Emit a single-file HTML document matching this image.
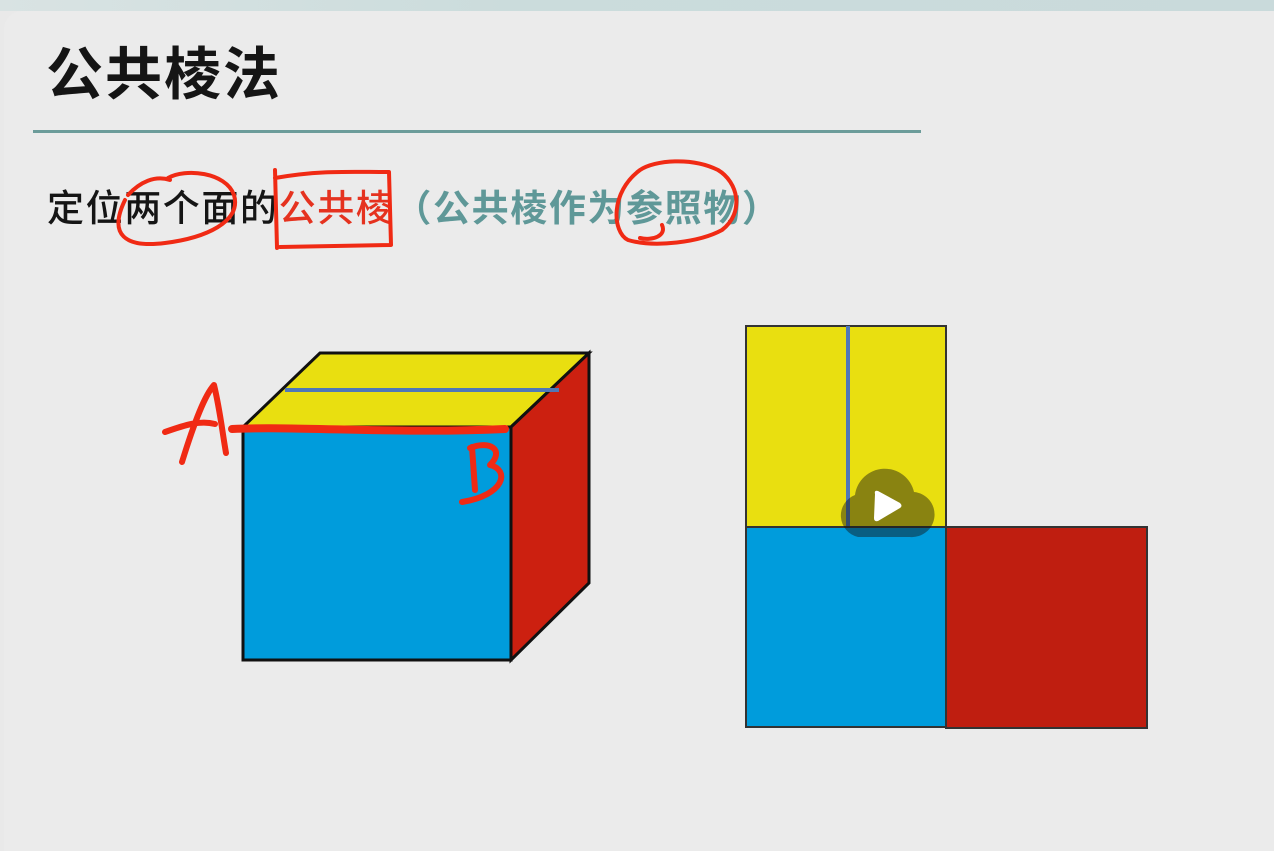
<!DOCTYPE html>
<html><head><meta charset="utf-8"><style>
html,body{margin:0;padding:0;width:1274px;height:841px;overflow:hidden;background:#e9e9e9;}
.top{position:absolute;left:0;top:0;width:1274px;height:11px;background:linear-gradient(90deg,#d9e3e3,#cbdcdc 40%,#c9dadb);}
.card{position:absolute;left:4px;top:11px;width:1280px;height:840px;background:#ebebeb;border-top-left-radius:18px;}
.t{position:absolute;font-family:"Liberation Sans","Noto Sans CJK SC",sans-serif;white-space:nowrap;}
</style></head><body>
<div class="top"></div>
<div class="card"></div>
<div class="t" style="left:46px;top:42px;font-size:57px;letter-spacing:2px;font-weight:bold;color:#151515;line-height:66px;">公共棱法</div>
<div style="position:absolute;left:33px;top:130px;width:888px;height:3px;background:#6c9c9a;"></div>
<div class="t" style="left:47px;top:186px;font-size:37px;letter-spacing:1.6px;line-height:46px;color:#151515;font-weight:500;">定位两个面的<span style="color:#e5321f">公共棱</span><span style="color:#5f9898;font-weight:bold">（公共棱作为参照物）</span></div>
<svg style="position:absolute;left:0;top:0" width="1274" height="841">
 <polygon points="243,427 320,353 589,353 511,427" fill="#e9df10" stroke="#111" stroke-width="3"/>
 <polygon points="511,427 589,353 589,583 511,660" fill="#cc2010" stroke="#111" stroke-width="3"/>
 <rect x="243" y="427" width="268" height="233" fill="#009cdc" stroke="#111" stroke-width="3"/>
 <line x1="285" y1="390" x2="559" y2="390" stroke="#4f78b8" stroke-width="4"/>
 <g fill="none" stroke="#f02a14" stroke-width="6" stroke-linecap="round" stroke-linejoin="round">
  <path d="M232,429 C300,426 400,434 505,429" stroke-width="8"/>
  <path d="M165,432 C185,425 200,420 215,424 M182,462 C195,420 205,395 214,385 C220,410 222,430 226,453"/>
  <path d="M472,447 L475,490 M470,448 C490,440 505,450 490,465 C510,470 505,495 462,502"/>
  <path d="M125,200 C108,235 125,248 165,243 C205,238 242,222 234,195 C226,172 185,168 168,178 M170,180 C155,175 140,182 128,195" stroke-width="4"/>
  <path d="M275,170 L277,248 M275,178 C320,170 350,172 389,172 L391,245 L280,247" stroke-width="4"/>
  <path d="M640,170 C610,192 612,232 628,240 C655,248 700,242 722,230 C745,212 738,182 718,170 C692,157 655,160 640,170 M662,225 C667,236 652,241 640,238" stroke-width="4"/>
 </g>
 <rect x="746" y="326" width="200" height="201" fill="#e9df10" stroke="#333" stroke-width="2"/>
 <line x1="848" y1="326" x2="848" y2="527" stroke="#4f78b8" stroke-width="4"/>
 <rect x="746" y="527" width="200" height="200" fill="#009cdc" stroke="#333" stroke-width="2"/>
 <rect x="946" y="527" width="201" height="201" fill="#bf1e10" stroke="#333" stroke-width="2"/>
 <path d="M858,537 A22,22 0 0 1 855,495 A30,30 0 0 1 914,492 A22,22 0 0 1 910,537 Z" fill="rgba(20,20,20,0.45)"/>
 <path d="M875,494 Q874,490 878,491 L900,503 Q903,506 900,508 L878,521 Q874,522 874,518 Z" fill="#fff"/>
</svg>
</body></html>
